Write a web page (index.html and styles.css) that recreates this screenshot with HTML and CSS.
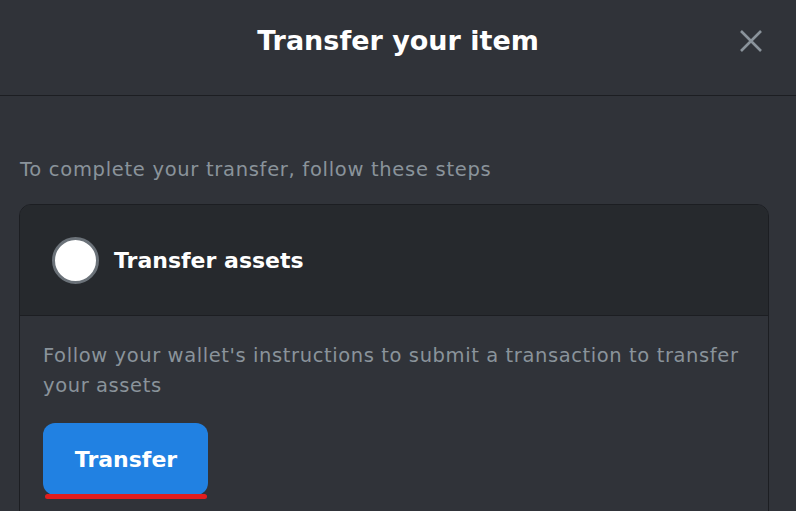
FILE: index.html
```html
<!DOCTYPE html>
<html lang="en">
<head>
<meta charset="utf-8">
<title>Transfer your item</title>
<link rel="stylesheet" href="styles.css">
</head>
<body>
<div class="modal">
  <header class="modal-header">
    <span class="spacer"></span>
    <h1 class="title">Transfer your item</h1>
    <button class="close" aria-label="Close">
      <svg width="24" height="24" viewBox="0 0 24 24"><path d="M2 2 L22 22 M22 2 L2 22" stroke="#8a939b" stroke-width="2.6" stroke-linecap="butt" fill="none"/></svg>
    </button>
  </header>
  <main class="modal-body">
    <p class="intro">To complete your transfer, follow these steps</p>
    <section class="step">
      <div class="step-head">
        <span class="step-dot"></span>
        <h2 class="step-title">Transfer assets</h2>
      </div>
      <div class="step-body">
        <p class="step-text">Follow your wallet's instructions to submit a transaction to transfer your assets</p>
        <button class="btn-primary">Transfer</button>
      </div>
    </section>
  </main>
</div>
</body>
</html>
```
FILE: styles.css
```css
* { box-sizing: border-box; }
html, body { margin: 0; padding: 0; }
body {
  background: #303339;
  font-family: "DejaVu Sans", "Open Sans", sans-serif;
  color: #ffffff;
  width: 796px;
  height: 511px;
  overflow: hidden;
}
.modal-header {
  height: 96px;
  border-bottom: 1px solid #1c1e22;
  display: grid;
  grid-template-columns: 1fr auto 1fr;
  align-items: center;
  padding-bottom: 14px;
}
.title {
  margin: 0;
  font-size: 27px;
  font-weight: 700;
  text-align: center;
}
.close {
  justify-self: end;
  margin-right: 33px;
  background: none;
  border: 0;
  padding: 0;
  width: 24px;
  height: 24px;
  display: flex;
}
.modal-body {
  padding: 0 27px 0 19px;
}
.intro {
  margin: 60px 0 20px 1px;
  font-size: 19.5px;
  letter-spacing: 0.7px;
  line-height: 28px;
  color: #8a939b;
}
.step {
  border: 1px solid #1c1e22;
  border-radius: 12px;
  overflow: hidden;
  height: 320px;
}
.step-head {
  height: 111px;
  background: #26292d;
  border-bottom: 1px solid #1c1e22;
  display: flex;
  align-items: center;
  padding-left: 32px;
  gap: 15px;
}
.step-dot {
  width: 47px;
  height: 47px;
  border-radius: 50%;
  background: #ffffff;
  border: 3px solid #6b7279;
}
.step-title {
  margin: 0;
  font-size: 22px;
  font-weight: 700;
}
.step-body {
  padding: 25px 20px 24px 23px;
}
.step-text {
  margin: 0 0 22px;
  font-size: 19.5px;
  letter-spacing: 0.6px;
  line-height: 30px;
  color: #8a939b;
}
.btn-primary {
  position: relative;
  width: 165px;
  height: 72px;
  border: 0;
  border-radius: 12px;
  background: #2181e2;
  color: #ffffff;
  font-family: inherit;
  font-size: 22px;
  font-weight: 700;
  padding: 0 0 0 1px;
}
.btn-primary::after {
  content: "";
  position: absolute;
  left: 2px;
  right: 1px;
  bottom: -4px;
  height: 5px;
  border-radius: 3px;
  background: #e11d1d;
}
```
